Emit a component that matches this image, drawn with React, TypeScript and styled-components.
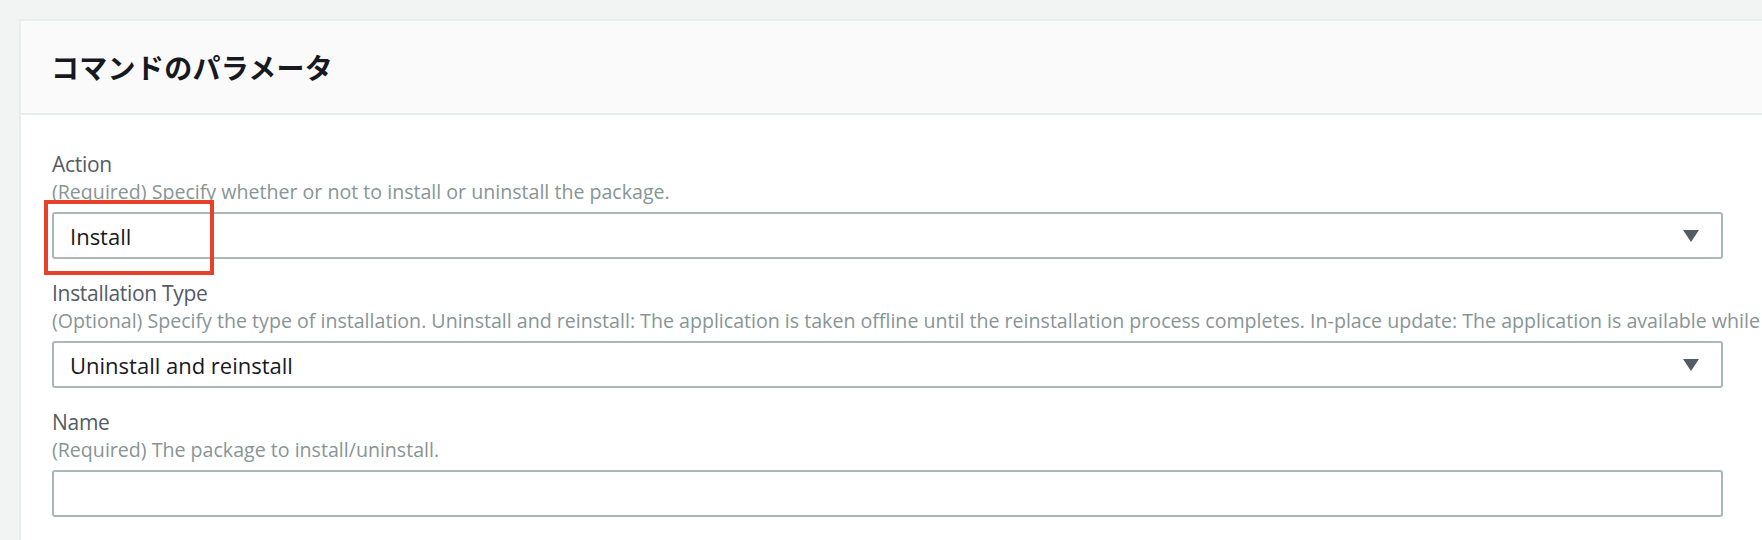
import React from "react";
import styled, { createGlobalStyle } from "styled-components";

const Global = createGlobalStyle`
  html, body { margin: 0; padding: 0; background: #f2f3f3; overflow: hidden; }
  body { font-family: "Open Sans", "Noto Sans CJK JP", sans-serif; }
  * { box-sizing: border-box; }
`;

const Page = styled.div`
  width: 1762px;
  height: 540px;
  padding: 19px 0 0 19px;
  overflow: hidden;
`;

const Panel = styled.section`
  background: #ffffff;
  border-top: 2px solid #eaeded;
  border-left: 2px solid #eaeded;
  height: 100%;
  overflow: hidden;
`;

const Header = styled.header`
  height: 94px;
  background: #fafafa;
  border-bottom: 2px solid #eaeded;
  display: flex;
  align-items: center;
  padding-left: 30px;
`;

const Title = styled.h2`
  margin: 0;
  font-family: "Noto Sans CJK JP", sans-serif;
  font-weight: 700;
  font-size: 28px;
  color: #16191f;
  letter-spacing: 0.3px;
`;

const Body = styled.div`
  display: flex;
  flex-direction: column;
  gap: 19px;
  padding: 34px 39px 0 31px;
`;

const Field = styled.div`
  display: flex;
  flex-direction: column;
`;

const Label = styled.div`
  font-size: 21px;
  line-height: 30px;
  color: #545b64;
  letter-spacing: -0.3px;
`;

const Description = styled.div`
  font-size: 19.6px;
  line-height: 26px;
  color: #879596;
  white-space: nowrap;
  margin-bottom: 7px;
`;

const Control = styled.div`
  position: relative;
  height: 47px;
  border: 2px solid #aab7b8;
  border-radius: 3px;
  background: #fff;
  display: flex;
  align-items: center;
  padding: 0 16px;
  font-size: 22px;
  color: #16191f;
`;

const Value = styled.span`
  flex: 1;
`;

const Caret = styled.svg`
  width: 16px;
  height: 12px;
  margin-right: 6px;
`;

const Highlight = styled.div`
  position: absolute;
  left: -10px;
  top: -14px;
  width: 170px;
  height: 75px;
  border: 4px solid #e8412a;
  pointer-events: none;
`;

const Arrow = () => (
  <Caret viewBox="0 0 16 12">
    <path d="M0 0 H16 L8 12 Z" fill="#545b64" />
  </Caret>
);

export default function App() {
  return (
    <>
      <Global />
      <Page>
        <Panel>
          <Header>
            <Title>コマンドのパラメータ</Title>
          </Header>
          <Body>
            <Field>
              <Label>Action</Label>
              <Description>(Required) Specify whether or not to install or uninstall the package.</Description>
              <Control>
                <Value>Install</Value>
                <Arrow />
                <Highlight />
              </Control>
            </Field>
            <Field>
              <Label>Installation Type</Label>
              <Description>
                (Optional) Specify the type of installation. Uninstall and reinstall: The application is taken offline until the reinstallation process completes. In-place update: The application is available while new or updated files are added to the installation.
              </Description>
              <Control>
                <Value>Uninstall and reinstall</Value>
                <Arrow />
              </Control>
            </Field>
            <Field>
              <Label>Name</Label>
              <Description>(Required) The package to install/uninstall.</Description>
              <Control />
            </Field>
            <Field>
              <Label>Version</Label>
              <Description>(Optional) A specific version of the package to install or uninstall.</Description>
              <Control />
            </Field>
          </Body>
        </Panel>
      </Page>
    </>
  );
}
